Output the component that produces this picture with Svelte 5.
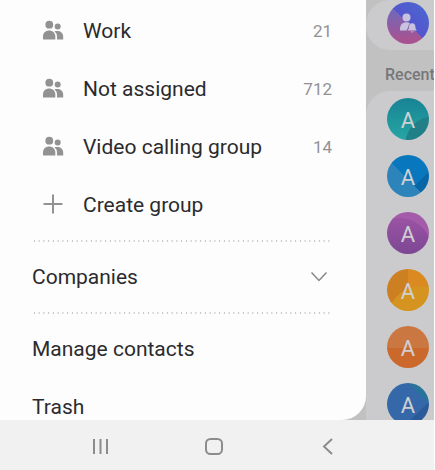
<script lang="ts">
  const groups = [
    { name: 'Work', count: 21 },
    { name: 'Not assigned', count: 712 },
    { name: 'Video calling group', count: 14 },
  ];

  const recent = ['teal', 'blue', 'purple', 'amber', 'orange', 'navy'];
</script>

<div class="screen">
  <div class="stage">
    <aside class="drawer">
      <ul>
        {#each groups as group}
          <li>
            <button class="row">
              <svg class="icon" viewBox="0 0 22 22" aria-hidden="true">
                <circle cx="7.300" cy="4.700" r="3.900" />
                <circle cx="15.700" cy="6.600" r="3" />
                <path d="M1 19.600v-3.200c0-8 12.300-8 12.300 0v3.200z" />
                <path d="M15 19.600v-3.200q0-3-2.500-5.200c5-1 8.700 1 8.700 5.200v3.200z" />
              </svg>
              <span class="label">{group.name}</span>
              <span class="count">{group.count}</span>
            </button>
          </li>
        {/each}
        <li>
          <button class="row">
            <svg class="icon" viewBox="0 0 22 22" aria-hidden="true">
              <path class="line" d="M1.500 10h19M11 .5v19" />
            </svg>
            <span class="label">Create group</span>
          </button>
        </li>
      </ul>
      <hr />
      <button class="row">
        <span class="label">Companies</span>
        <svg class="chevron" viewBox="0 0 18 18" aria-hidden="true">
          <path d="M1.500 4.500L9 12.500l7.500-8" />
        </svg>
      </button>
      <hr />
      <button class="row"><span class="label">Manage contacts</span></button>
      <button class="row"><span class="label">Trash</span></button>
    </aside>

    <main class="contacts">
      <section class="card top">
        <div class="avatar profile">
          <svg viewBox="0 0 42 42" aria-hidden="true">
            <circle cx="19.500" cy="15.500" r="4" />
            <path d="M13 28.500v-2q0-6 6.500-6.300q2.500 0 3.500 1q-2 2-2 4.300l-1.500 3z" />
            <path d="M20.500 28.500q1.500-1 1.500-3.500a3.200 3.800 0 0 1 6.400 0q0 2.500 1.500 3.500zM23.500 29.500h3.500q-1.750 2-3.500 0z" />
          </svg>
        </div>
      </section>
      <h2>Recent</h2>
      <section class="card list">
        {#each recent as tone}
          <div class="avatar {tone}">A</div>
        {/each}
      </section>
    </main>
  </div>

  <nav>
    <button aria-label="Recent apps">
      <svg viewBox="0 0 20 20"><path d="M4 2v15M10.500 2v15M17 2v15" /></svg>
    </button>
    <button aria-label="Home">
      <svg viewBox="0 0 20 20"><rect x="2" y="2" width="16" height="15" rx="4.500" /></svg>
    </button>
    <button aria-label="Back">
      <svg viewBox="0 0 20 20"><path d="M14 2L6 9.500L14 17" /></svg>
    </button>
  </nav>
</div>

<style>
  :global(body) {
    margin: 0;
    background: #fdfdfe;
  }

  .screen {
    box-sizing: border-box;
    height: 100vh;
    display: flex;
    flex-direction: column;
    border-right: 1px solid #d4d4d4;
    font-family: Roboto, sans-serif;
    color: #2b2b2d;
    overflow: hidden;
  }

  .stage {
    flex: 1;
    min-height: 0;
    display: flex;
    margin-right: 1px;
    background: #c1c1c1;
    overflow: hidden;
  }

  .drawer {
    box-sizing: border-box;
    flex: 1;
    padding: 2px 34px 0 32px;
    background: #fdfdfe;
    border-bottom-right-radius: 24px;
    overflow: hidden;
  }

  ul {
    list-style: none;
    margin: 0;
    padding: 0;
  }

  button {
    border: 0;
    padding: 0;
    background: none;
    font: inherit;
    color: inherit;
  }

  .row {
    width: 100%;
    height: 58px;
    display: flex;
    align-items: center;
    text-align: left;
    font-size: 21px;
    line-height: 28px;
  }

  .label {
    flex: 1;
    white-space: nowrap;
  }

  .count {
    color: #929294;
    font-size: 17px;
  }

  .icon {
    width: 22px;
    height: 22px;
    margin: 0 19px 0 10px;
    fill: #929292;
  }

  .line {
    fill: none;
    stroke: #929292;
    stroke-width: 2;
  }

  .chevron {
    width: 18px;
    height: 18px;
    margin-right: 4px;
    fill: none;
    stroke: #88888a;
    stroke-width: 1.5;
  }

  hr {
    height: 2px;
    margin: 6px 0;
    border: 0;
    background: radial-gradient(circle at center, #bfbfc2 1px, transparent 1px) 0 0 / calc(100% / 63) 2px repeat-x;
  }

  .contacts {
    width: 68px;
    display: flex;
    flex-direction: column;
    background: #c1c1c1;
    overflow: hidden;
  }

  .card {
    flex: none;
    background: #cbcbcd;
    padding-left: 21px;
  }

  .top {
    box-sizing: border-box;
    height: 50px;
    padding-top: 2px;
    border-radius: 24px 0 0 24px;
  }

  .list {
    display: flex;
    flex-direction: column;
    gap: 15px;
    padding-top: 7px;
    padding-bottom: 7px;
    border-top-left-radius: 24px;
  }

  h2 {
    margin: 0;
    padding: 9px 0 0 19px;
    color: #77777a;
    font-size: 16px;
    font-weight: 500;
    line-height: 32px;
  }

  .avatar {
    width: 42px;
    height: 42px;
    border-radius: 50%;
    color: #d0d0d3;
    font-size: 22px;
    line-height: 45px;
    text-align: center;
  }

  .avatar svg {
    display: block;
    fill: #c9c2de;
  }

  .profile {
    background: linear-gradient(45deg, transparent 50%, #5355cd 50%, #4a6bd0), linear-gradient(#6a6ac0 10%, #a85391 90%);
  }

  .teal {
    background: radial-gradient(circle at 110% 110%, #218087 42%, transparent 43%), linear-gradient(#188394, #26a6a4);
  }

  .blue {
    background: linear-gradient(45deg, #2c84bb 46%, transparent 46%), linear-gradient(135deg, #0877bd 70%, #0866a6 70%);
  }

  .purple {
    background: radial-gradient(circle at 30% 90%, transparent 66%, #a45ba9 67%), linear-gradient(#a055a7, #7c4793);
  }

  .amber {
    background: radial-gradient(circle at 80% 120%, #d5941f 54%, transparent 55%), linear-gradient(90deg, #cc8022 50%, #da8a20 50%);
  }

  .orange {
    background: linear-gradient(#ca7742 52%, #cb692d 52%);
  }

  .navy {
    background: linear-gradient(45deg, transparent 76%, #26749a 76%), linear-gradient(135deg, #3468a8 72%, #2c5997 72%);
  }

  nav {
    flex: none;
    height: 50px;
    display: flex;
    align-items: center;
    justify-content: center;
    gap: 94px;
    margin-right: 1px;
    padding: 3px 6px 0 0;
    box-sizing: border-box;
    background: #f1f1f1;
  }

  nav button,
  nav svg {
    display: block;
    width: 20px;
    height: 20px;
  }

  nav svg {
    fill: none;
    stroke: #8c8c8c;
    stroke-width: 2;
  }
</style>
